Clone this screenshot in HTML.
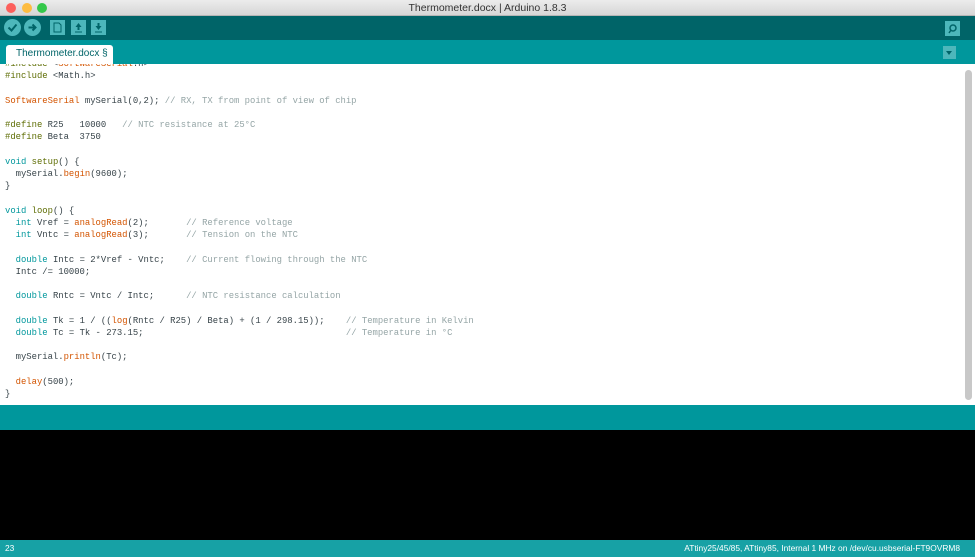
<!DOCTYPE html>
<html><head><meta charset="utf-8"><style>
*{margin:0;padding:0;box-sizing:border-box}
body{width:975px;height:557px;overflow:hidden;background:#000;font-family:"Liberation Sans",sans-serif;position:relative}
#title{position:absolute;left:0;top:0;width:975px;height:16px;background:linear-gradient(#ececec,#d6d6d6);border-bottom:1px solid #b5b5b5;text-align:center;font-size:10.5px;line-height:16px;color:#333}
.dot{position:absolute;top:3px;width:10px;height:10px;border-radius:50%}
#tb{position:absolute;left:0;top:16px;width:975px;height:24px;background:#006468}
.rb{position:absolute;top:3px;width:17px;height:17px;border-radius:50%;background:#4db7bb}
.sb{position:absolute;top:4px;width:15px;height:15px;background:#4db7bb}
#tabs{position:absolute;left:0;top:40px;width:975px;height:24px;background:#00979c}
#tab{position:absolute;left:6px;top:5px;width:107px;height:20px;background:#fff;border-radius:3px 3px 0 0;font-size:10px;color:#006468;padding-left:10px;line-height:17px}
#ed{position:absolute;left:0;top:64px;width:975px;height:341px;background:#fff;overflow:hidden}
pre{position:absolute;left:5px;top:-6px;font-family:"Liberation Mono",monospace;font-size:8.9px;line-height:12.22px;color:#38444a}
.k{color:#00979c}.p{color:#5e6d03}.f{color:#d35400}.c{color:#95a5a6}
#scroll{position:absolute;left:965px;top:6px;width:7px;height:330px;border-radius:4px;background:#c8c8c8}
#div{position:absolute;left:0;top:405px;width:975px;height:25px;background:#00979c}
#con{position:absolute;left:0;top:430px;width:975px;height:110px;background:#000}
#st{position:absolute;left:0;top:540px;width:975px;height:17px;background:#17a1a5;color:#fff;font-size:8.4px;line-height:17px}
</style></head><body>
<div id="title">Thermometer.docx | Arduino 1.8.3
<div class="dot" style="left:6px;background:#fc605c"></div><div class="dot" style="left:22px;background:#fdbc40"></div><div class="dot" style="left:37px;background:#34c84a"></div></div>
<div id="tb">
<div class="rb" style="left:4px"><svg width="17" height="17"><path d="M4.5 8.5l3 3 5-6" stroke="#006468" stroke-width="2" fill="none"/></svg></div>
<div class="rb" style="left:24px"><svg width="17" height="17"><path d="M4.5 8.5h7M8.5 5.5l3 3-3 3" stroke="#006468" stroke-width="2" fill="none"/></svg></div>
<div class="sb" style="left:50px"><svg width="15" height="15"><path d="M4 3h5l2 2v7H4z" stroke="#006468" fill="none"/></svg></div>
<div class="sb" style="left:71px"><svg width="15" height="15"><path d="M7.5 3l-3 4h2v3h2V7h2z" fill="#006468"/><path d="M4 12h7" stroke="#006468"/></svg></div>
<div class="sb" style="left:91px"><svg width="15" height="15"><path d="M7.5 10l-3-4h2V3h2v3h2z" fill="#006468"/><path d="M4 12h7" stroke="#006468"/></svg></div>
<div class="sb" style="left:945px;top:5px"><svg width="15" height="15"><circle cx="8" cy="7" r="3" stroke="#006468" stroke-width="1.5" fill="none"/><path d="M6 9l-2 3" stroke="#006468" stroke-width="1.5"/></svg></div>
</div>
<div id="tabs"><div id="tab">Thermometer.docx §</div>
<div style="position:absolute;left:943px;top:6px;width:13px;height:13px;background:#4db7bb"><div style="margin:5px 0 0 3px;width:0;height:0;border-left:3.5px solid transparent;border-right:3.5px solid transparent;border-top:4px solid #006468"></div></div></div>
<div id="ed"><pre><span class="p">#include</span> &lt;<span class="f">SoftwareSerial</span>.h&gt;
<span class="p">#include</span> &lt;Math.h&gt;

<span class="f">SoftwareSerial</span> mySerial(0,2); <span class="c">// RX, TX from point of view of chip</span>

<span class="p">#define</span> R25   10000   <span class="c">// NTC resistance at 25°C</span>
<span class="p">#define</span> Beta  3750

<span class="k">void</span> <span class="p">setup</span>() {
  mySerial.<span class="f">begin</span>(9600);
}

<span class="k">void</span> <span class="p">loop</span>() {
  <span class="k">int</span> Vref = <span class="f">analogRead</span>(2);       <span class="c">// Reference voltage</span>
  <span class="k">int</span> Vntc = <span class="f">analogRead</span>(3);       <span class="c">// Tension on the NTC</span>

  <span class="k">double</span> Intc = 2*Vref - Vntc;    <span class="c">// Current flowing through the NTC</span>
  Intc /= 10000;

  <span class="k">double</span> Rntc = Vntc / Intc;      <span class="c">// NTC resistance calculation</span>

  <span class="k">double</span> Tk = 1 / ((<span class="f">log</span>(Rntc / R25) / Beta) + (1 / 298.15));    <span class="c">// Temperature in Kelvin</span>
  <span class="k">double</span> Tc = Tk - 273.15;                                      <span class="c">// Temperature in °C</span>

  mySerial.<span class="f">println</span>(Tc);

  <span class="f">delay</span>(500);
}</pre><div id="scroll"></div></div>
<div id="div"></div>
<div id="con"></div>
<div id="st"><span style="position:absolute;left:5px">23</span><span style="position:absolute;right:15px">ATtiny25/45/85, ATtiny85, Internal 1 MHz on /dev/cu.usbserial-FT9OVRM8</span></div>
</body></html>
